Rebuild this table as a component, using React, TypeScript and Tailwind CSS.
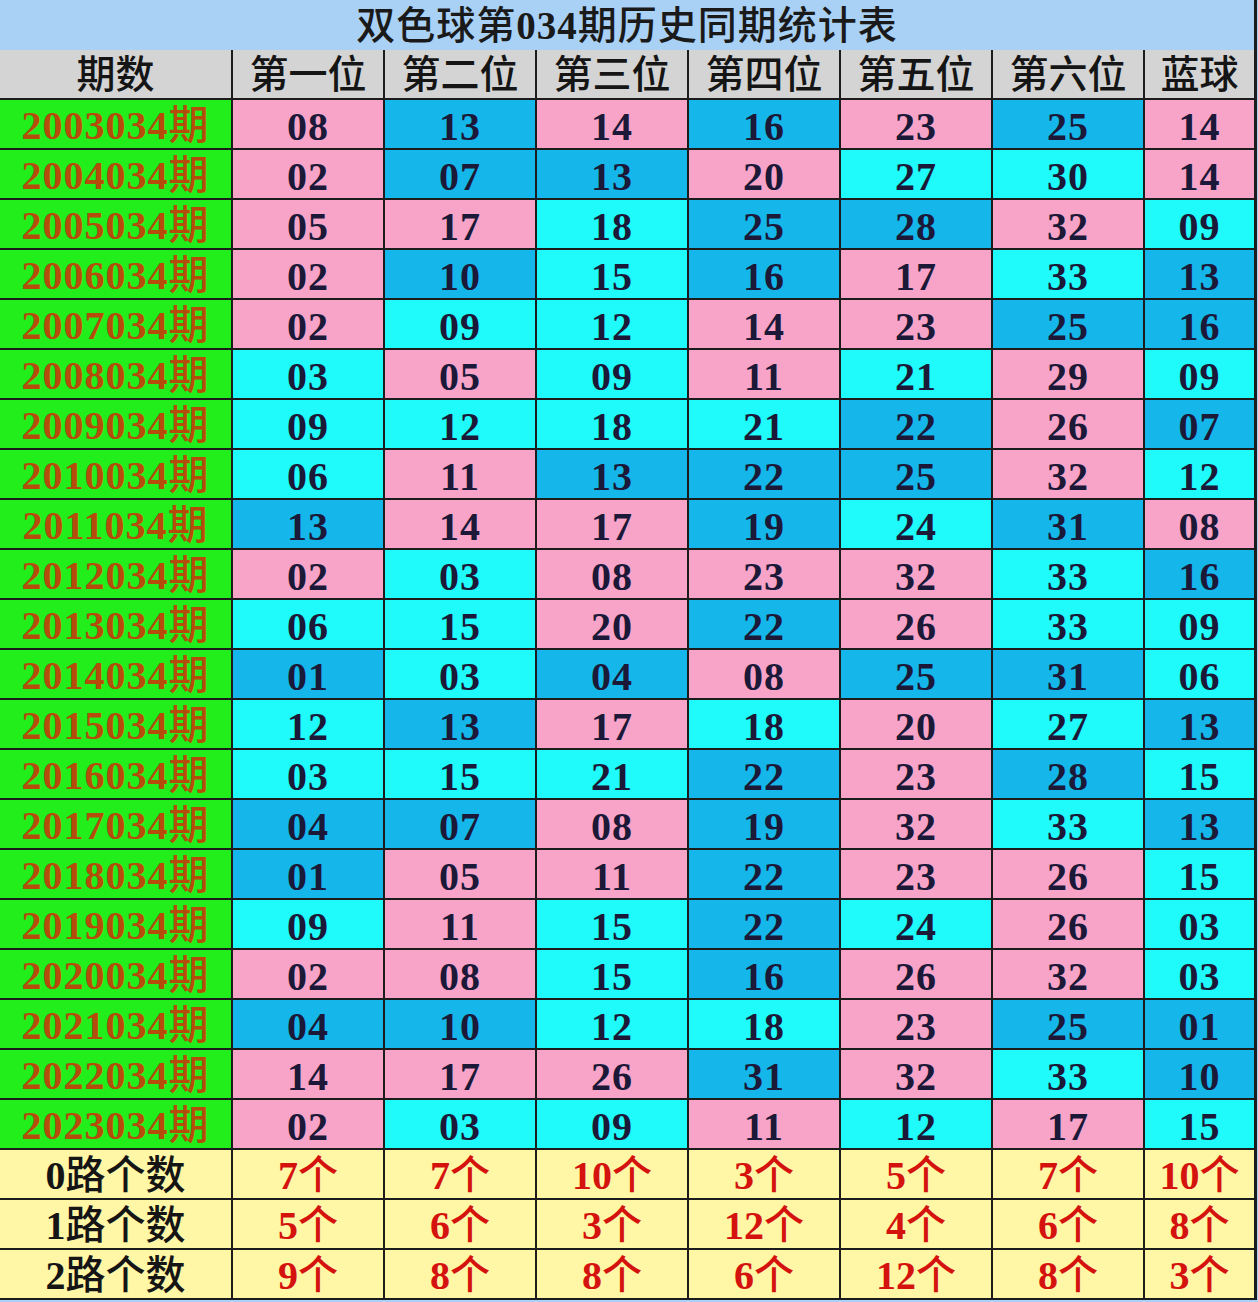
import React from "react";

const rows: [string, number[]][] = [
  ["2003034", [8, 13, 14, 16, 23, 25, 14]],
  ["2004034", [2, 7, 13, 20, 27, 30, 14]],
  ["2005034", [5, 17, 18, 25, 28, 32, 9]],
  ["2006034", [2, 10, 15, 16, 17, 33, 13]],
  ["2007034", [2, 9, 12, 14, 23, 25, 16]],
  ["2008034", [3, 5, 9, 11, 21, 29, 9]],
  ["2009034", [9, 12, 18, 21, 22, 26, 7]],
  ["2010034", [6, 11, 13, 22, 25, 32, 12]],
  ["2011034", [13, 14, 17, 19, 24, 31, 8]],
  ["2012034", [2, 3, 8, 23, 32, 33, 16]],
  ["2013034", [6, 15, 20, 22, 26, 33, 9]],
  ["2014034", [1, 3, 4, 8, 25, 31, 6]],
  ["2015034", [12, 13, 17, 18, 20, 27, 13]],
  ["2016034", [3, 15, 21, 22, 23, 28, 15]],
  ["2017034", [4, 7, 8, 19, 32, 33, 13]],
  ["2018034", [1, 5, 11, 22, 23, 26, 15]],
  ["2019034", [9, 11, 15, 22, 24, 26, 3]],
  ["2020034", [2, 8, 15, 16, 26, 32, 3]],
  ["2021034", [4, 10, 12, 18, 23, 25, 1]],
  ["2022034", [14, 17, 26, 31, 32, 33, 10]],
  ["2023034", [2, 3, 9, 11, 12, 17, 15]],
];

const headers = ["期数", "第一位", "第二位", "第三位", "第四位", "第五位", "第六位", "蓝球"];

const summary: [string, number[]][] = [
  ["0", [7, 7, 10, 3, 5, 7, 10]],
  ["1", [5, 6, 3, 12, 4, 6, 8]],
  ["2", [9, 8, 8, 6, 12, 8, 3]],
];

function cellBg(n: number) {
  const m = n % 3;
  if (m === 0) return "bg-[#1ffafa]";
  if (m === 1) return "bg-[#15b6ea]";
  return "bg-[#f8a4c8]";
}

const font = { fontFamily: '"Liberation Serif", "Noto Sans CJK SC", serif' };

export default function App() {
  return (
    <div className="w-[1258px] h-[1302px] bg-[#a9d1f5]" style={font}>
      <div className="grid grid-cols-[231px_repeat(6,150px)_1fr] gap-[2px] bg-[#1c1c1c] pr-[3px] pb-[2px] w-[1257px]">
        <div className="col-span-8 h-[50px] bg-[#a9d1f5] flex items-center justify-center text-[39px] text-[#1a1a1a] tracking-[1px] mb-[-2px] pt-[2px]">
          <span className="font-medium">双色球第</span>
          <span className="font-bold">034</span>
          <span className="font-medium">期历史同期统计表</span>
        </div>
        {headers.map((h) => (
          <div key={h} className="h-[48px] bg-[#d4d4d4] flex items-center justify-center text-[39px] font-medium text-[#151515] pt-[3px]">
            {h}
          </div>
        ))}
        {rows.map(([label, nums]) => (
          <React.Fragment key={label}>
            <div className="h-[48px] bg-[#22ee1c] flex items-center justify-center text-[40px] text-[#b54c0c] tracking-[1px] pt-[4px]">
              <span className="font-bold">{label}</span>
              <span className="font-medium">期</span>
            </div>
            {nums.map((n, i) => (
              <div key={i} className={`h-[48px] ${cellBg(n)} flex items-center justify-center text-[40px] font-bold text-[#1b1838] tracking-[1px] pt-[6px]`}>
                {String(n).padStart(2, "0")}
              </div>
            ))}
          </React.Fragment>
        ))}
        {summary.map(([label, nums]) => (
          <React.Fragment key={label}>
            <div className="h-[48px] bg-[#fff6a6] flex items-center justify-center text-[40px] text-[#151515] pt-[3px]">
              <span className="font-bold">{label}</span>
              <span className="font-medium">路个数</span>
            </div>
            {nums.map((n, i) => (
              <div key={i} className="h-[48px] bg-[#fff6a6] flex items-center justify-center text-[40px] text-[#d4120e] pt-[3px]">
                <span className="font-bold">{n}</span>
                <span className="font-medium">个</span>
              </div>
            ))}
          </React.Fragment>
        ))}
      </div>
    </div>
  );
}
